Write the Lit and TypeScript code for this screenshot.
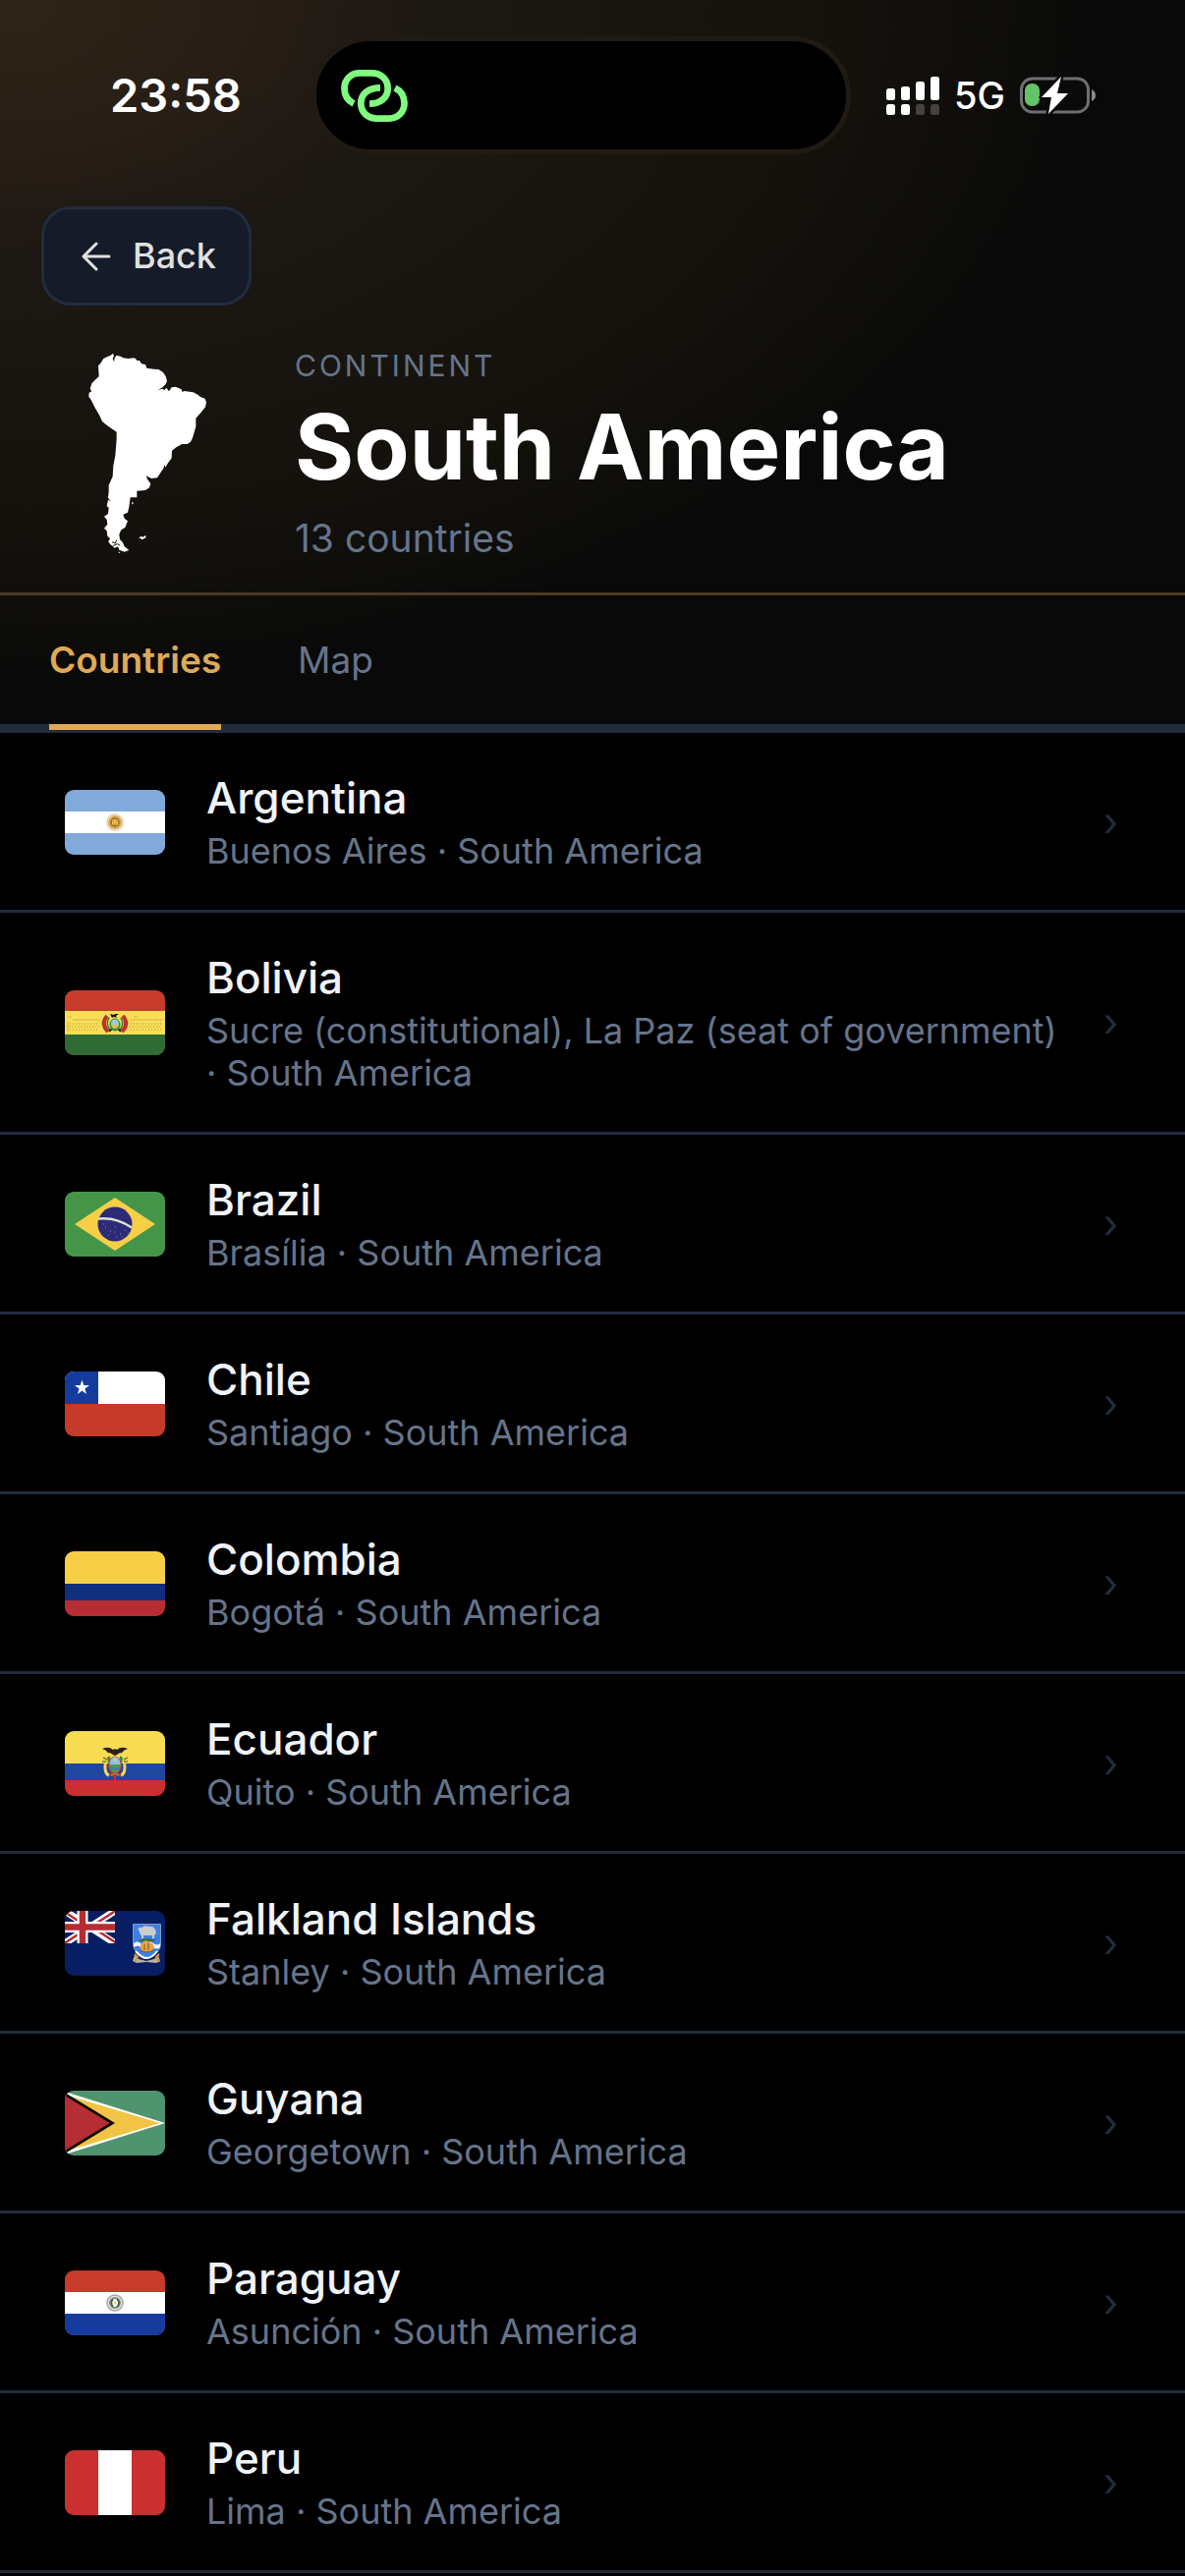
import { LitElement, html, svg, css, type TemplateResult } from "lit";
import { customElement, property, state } from "lit/decorators.js";
import { classMap } from "lit/directives/class-map.js";

interface Country {
  name: string;
  capital: string;
  flag: string;
}

const COUNTRIES: Country[] = [
  { name: "Argentina", capital: "Buenos Aires", flag: "ar" },
  { name: "Bolivia", capital: "Sucre (constitutional), La Paz (seat of government)", flag: "bo" },
  { name: "Brazil", capital: "Brasília", flag: "br" },
  { name: "Chile", capital: "Santiago", flag: "cl" },
  { name: "Colombia", capital: "Bogotá", flag: "co" },
  { name: "Ecuador", capital: "Quito", flag: "ec" },
  { name: "Falkland Islands", capital: "Stanley", flag: "fk" },
  { name: "Guyana", capital: "Georgetown", flag: "gy" },
  { name: "Paraguay", capital: "Asunción", flag: "py" },
  { name: "Peru", capital: "Lima", flag: "pe" },
];

// every flag is drawn on a 102x66 canvas
const FLAGS: Record<string, TemplateResult> = {
  ar: svg`
    <rect width="102" height="66" fill="#81a9da" />
    <rect y="22" width="102" height="22" fill="#fff" />
    <circle cx="51" cy="33" r="8" fill="none" stroke="#c9b48c" stroke-width="2" stroke-dasharray="1 1" />
    <circle cx="51" cy="33" r="7" fill="#e0a550" />
    <circle cx="51" cy="33" r="4" fill="#f2c14a" stroke="#8d6a2c" stroke-width="1.5" />
    <path d="M49 32h1M52 32h1M50 35h2" stroke="#8d6a2c" />
  `,
  bo: svg`
    <rect width="102" height="66" fill="#c63b2b" />
    <rect y="21" width="102" height="24" fill="#f6df56" />
    <rect y="45" width="102" height="21" fill="#306b33" />
    <path d="M3 27h4M8 30h28M3 32v10M66 30h34M70 27h4" stroke="#dfb04e" fill="none" />
    <path d="M5 34h30M4 37h31M5 40h30M67 34h31M66 37h32M67 40h31" stroke="#dfb04e" stroke-width="2" stroke-dasharray="1 2" />
    <path d="M43 26q-7 8 1 16M59 26q7 8-1 16" stroke="#bd322d" stroke-width="4" fill="none" />
    <path d="M45 28q-4 6 1 12M57 28q4 6-1 12" stroke="#3b7a3a" stroke-width="1.5" fill="none" />
    <path d="M45 42l4-4M57 42l-4-4" stroke="#26361f" stroke-width="2" />
    <ellipse cx="51" cy="35" rx="5.5" ry="6.5" fill="#3f8a45" />
    <ellipse cx="51" cy="34" rx="4" ry="4.5" fill="#9fcbe0" />
    <path d="M47 35h8q-1 4-4 4t-4-4z" fill="#d8c24d" />
    <path d="M46 24l4 1 1-1 4 0-3 2 1 2-3-1-2 1z" fill="#17170f" />
  `,
  br: svg`
    <rect width="102" height="66" fill="#459549" />
    <path d="M10 33L51 6l41 27-41 27z" fill="#f7cf46" />
    <circle cx="51" cy="33" r="17.5" fill="#2d2a78" />
    <path d="M34 27.5q18-2 34 9" stroke="#d9e2d6" stroke-width="2.5" fill="none" />
    <path d="M41 36h1M46 40h1M51 36h1M50 41h1M56 43h1M61 39h1M58 46h1M44 44h1M52 46h1M39 33h1M64 42h1" stroke="#6d8fae" />
  `,
  cl: svg`
    <rect width="102" height="33" fill="#fff" />
    <rect y="33" width="102" height="33" fill="#c63a2a" />
    <rect width="34" height="33" fill="#163b9e" />
    <path d="M17.500 8.500l1.800 5.500h5.700l-4.600 3.400 1.700 5.600-4.600-3.400-4.600 3.400 1.700-5.600-4.600-3.400h5.700z" fill="#fff" />
  `,
  co: svg`
    <rect width="102" height="33" fill="#f7cf46" />
    <rect y="33" width="102" height="17" fill="#112f7f" />
    <rect y="50" width="102" height="16" fill="#b62d33" />
  `,
  ec: svg`
    <rect width="102" height="33" fill="#f8dd52" />
    <rect y="33" width="102" height="17" fill="#1f479c" />
    <rect y="50" width="102" height="16" fill="#ca302f" />
    <path d="M42 29q-3 14 3 16M60 29q3 14-3 16" stroke="#efd65c" stroke-width="3" fill="none" />
    <path d="M39 27l4 2M38 31h4M64 27l-4 2M64 31h-4" stroke="#8a7a3a" stroke-width="1.5" />
    <path d="M45 45l4-2M57 45l-4-2M51 43v7" stroke="#c8302e" stroke-width="2" />
    <ellipse cx="51" cy="34.5" rx="7" ry="9" fill="#c5352f" />
    <ellipse cx="51" cy="34" rx="5.5" ry="8" fill="#8fc0e6" />
    <path d="M45.500 34h11q0 7-5.500 8-5.500-1-5.500-8z" fill="#4f9a4a" />
    <path d="M46 37h10v2H47z" fill="#3f7ec0" />
    <circle cx="51" cy="29" r="1.5" fill="#f5d34d" />
    <path d="M43 27l3-2v5l-2 3zM59 27l-3-2v5l2 3z" fill="#3f8a45" />
    <path d="M38 18q7-3 11 1l2-1 2 1q4-4 11-1-4 1-6 4-3 0-5 2l-2 1-2-1q-2-2-5-2-2-3-6-4z" fill="#2a211b" />
    <path d="M46 45q5-5 10 0l-2 1-3-2-3 2z" fill="#a87a3c" />
  `,
  fk: svg`
    <rect width="102" height="66" fill="#081e64" />
    <svg width="51" height="33" viewBox="0 0 51 33">
      <path d="M0 0l51 33M51 0L0 33" stroke="#fff" stroke-width="7" />
      <path d="M-2 0l20 13M53 33L33 20M53-1L33 12M-2 34l20-13" stroke="#b52d33" stroke-width="2.5" />
      <path d="M18 0v33M0 16.500h51" stroke="#fff" stroke-width="11" />
      <path d="M18 0v33M0 16.500h51" stroke="#b52d33" stroke-width="6.5" />
    </svg>
    <path d="M69.500 13.500h28v20q0 10-14 15-14-5-14-15z" fill="#3f7fe8" stroke="#8c9ab0" />
    <path d="M75 20q-1-4 3-3 4-3 7-1 5-1 7 3 2 4-1 6v3h-2v-3h-9v3h-2v-3q-2-1-2-4z" fill="#ccccc8" />
    <path d="M74 30q10-4 19 0l-3 1H77z" fill="#3f6e35" />
    <path d="M70 33q4-3 7 0t6 0 7 0 7 0v4q-4 3-7 0t-7 0-6 0-7 0z" fill="#fff" />
    <path d="M77 34l5-4 4 2 4 2 1 4-4 4h-6l-4-3z" fill="#e8a43e" />
    <path d="M81 34v6M85 33v7M76 40q7 4 14 0" stroke="#7a5426" fill="none" />
    <path d="M72 41q6 7 11 7 6 0 11-7" stroke="#fff" stroke-width="2" fill="none" />
    <path d="M71 45l4 4 8 2 8-2 4-4 2 6-4 2-10-1-10 1-4-2z" fill="#b9b3a4" />
    <path d="M71 44l3 3-3 5M96 44l-3 3 3 5" stroke="#d9913a" stroke-width="2" fill="none" />
  `,
  gy: svg`
    <rect width="102" height="66" fill="#4f936f" />
    <path d="M0 1l102 32L0 65z" fill="#fff" />
    <path d="M0 4l97 29L0 62z" fill="#f1c445" />
    <path d="M0 2l51 31L0 64z" fill="#000" />
    <path d="M0 5l46 28L0 61z" fill="#b42e33" />
  `,
  py: svg`
    <rect width="102" height="66" fill="#c63b2b" />
    <rect y="22" width="102" height="22" fill="#fff" />
    <rect y="44" width="102" height="22" fill="#163a9e" />
    <circle cx="51" cy="33" r="8" fill="#e9e9e6" stroke="#a2a6a4" stroke-width="1.5" />
    <circle cx="51" cy="33" r="5" fill="#fff" stroke="#7e8a80" stroke-width="2" />
    <path d="M49 29q-3 4 0 8M53 29q4 4 0 8" stroke="#35603b" fill="none" stroke-width="1.5" />
    <circle cx="51" cy="33" r="1.5" fill="#ead94c" />
  `,
  pe: svg`
    <rect width="102" height="66" fill="#c9302f" />
    <rect x="34" width="34" height="66" fill="#fff" />
  `,
};

@customElement("status-bar")
export class StatusBar extends LitElement {

  static styles = css`

    :host{
      display:flex;
      align-items:center;
      padding:37px 90px 0 112px;
      color:#fff;
    }

    .time{
      width:134px;
      font-size:47px;
      font-weight:600;
      line-height:58px;
    }

    .island{
      flex:1;
      display:flex;
      align-items:center;
      box-sizing:border-box;
      height:120px;
      margin:0 36px 0 71px;
      padding-left:25px;
      border:5px solid #201a14;
      border-radius:60px;
      background:#000;
    }

    .status{
      display:flex;
      align-items:center;
      gap:15px;
    }

    .network{
      font-size:38px;
      font-weight:500;
      line-height:46px;
    }

    svg{
      display:block;
      flex:none;
    }

  `;

  render(){
    return html`

      <span class="time">23:58</span>

      <div class="island">
        <svg width="68" height="53" viewBox="0 0 68 53" fill="none" stroke="#80fb80" stroke-width="6.8" aria-hidden="true">
          <path d="M13 34.500C7 31.500 3.500 26 3.500 19C3.500 10 10 3.400 19 3.400H31C41 3.400 47.700 10 47.700 19C47.700 28.500 40 34.700 29 34.700" />
          <path d="M55 18.500C61 21.500 64.500 27 64.500 34C64.500 43 58 49.600 49 49.600H37C27 49.600 20.300 43 20.300 34C20.300 24.500 28 18.300 40 18.300" />
        </svg>
      </div>

      <div class="status">
        <svg width="54" height="39" viewBox="0 0 54 39" fill="#fff" aria-label="Signal">
          <rect y="12" width="9" height="12" rx="2.5" />
          <rect x="15" y="10" width="9" height="14" rx="2.5" />
          <rect x="30" y="5" width="9" height="19" rx="2.5" />
          <rect x="45" width="9" height="24" rx="2.5" />
          <rect y="28" width="9" height="11" rx="2.5" />
          <rect x="15" y="28" width="9" height="11" rx="2.5" />
          <rect x="30" y="28" width="9" height="11" rx="2.5" fill="#45413e" />
          <rect x="45" y="28" width="9" height="11" rx="2.5" fill="#45413e" />
        </svg>
        <span class="network">5G</span>
        <svg width="78" height="38" viewBox="0 0 78 38" aria-label="Battery charging">
          <rect x="1.5" y="2" width="68" height="34" rx="11" fill="none" stroke="#6f6f73" stroke-width="3" />
          <path d="M73 13q4 2 4 6t-4 6z" fill="#8a8a8d" />
          <rect x="5" y="7" width="15" height="23" rx="7" fill="#62c466" />
          <path d="M42 0L22 21h10l-3 17 20-21H38z" fill="#fff" stroke="#0d0c0a" stroke-width="5" stroke-linejoin="round" paint-order="stroke" />
        </svg>
      </div>

    `;
  }

}

@customElement("country-row")
export class CountryRow extends LitElement {

  @property({ attribute: false }) country!: Country;

  static styles = css`

    :host{
      display:block;
    }

    .row{
      display:flex;
      align-items:center;
      padding:39px 68px 38px 66px;
      border-bottom:3px solid #222c3e;
      color:inherit;
      text-decoration:none;
    }

    .flag{
      display:block;
      flex:none;
      width:102px;
      height:66px;
      margin-right:42px;
      border-radius:9px;
    }

    .text{
      flex:1;
      min-width:0;
    }

    .name{
      display:block;
      margin-bottom:6px;
      color:#f0f3f8;
      font-size:44px;
      font-weight:500;
      line-height:54px;
    }

    .place{
      display:block;
      color:#66748b;
      font-size:36px;
      line-height:43px;
    }

    .chevron{
      margin-left:40px;
      color:#222c3e;
      font-size:40px;
      line-height:54px;
    }

  `;

  render(){
    const { name, capital, flag } = this.country;

    return html`

      <a class="row" href="#${flag}">
        <svg class="flag" viewBox="0 0 102 66" aria-hidden="true">${FLAGS[flag]}</svg>
        <span class="text">
          <span class="name">${name}</span>
          <span class="place">${capital} · South America</span>
        </span>
        <span class="chevron" aria-hidden="true">›</span>
      </a>

    `;
  }

}

@customElement("app-root")
export class AppRoot extends LitElement {

  @state() private tab = "Countries";

  static styles = css`

    :host{
      display:block;
      min-height:100vh;
      background:#000;
      color:#fff;
      font-family:Inter, "Liberation Sans", sans-serif;
    }

    .top{
      background:radial-gradient(
        ellipse farthest-corner at 0 0,
        #2f2619 0%,
        #261d15 16%,
        #1d1813 25%,
        #191611 36%,
        #15120d 50%,
        #0e0d0a 60%,
        #090909 66%
      );
    }

    .header{
      padding-bottom:27px;
      border-bottom:3px solid #4b3a23;
    }

    .back{
      display:flex;
      align-items:center;
      gap:20px;
      margin:53px 0 43px 42px;
      padding:24px 33px 24px 36px;
      border:3px solid #212c3f;
      border-radius:30px;
      background:#151b28;
      color:#e0e0e0;
      font:500 36px/47px Inter, "Liberation Sans", sans-serif;
    }

    .hero{
      display:flex;
      gap:48px;
      padding:0 48px;
    }

    .shape{
      flex:none;
      width:204px;
      height:214px;
    }

    .eyebrow{
      margin:0;
      color:#66748b;
      font-size:30px;
      line-height:36px;
      letter-spacing:3px;
      text-transform:uppercase;
    }

    .title{
      margin:0;
      font-size:92px;
      font-weight:700;
      line-height:130px;
    }

    .count{
      margin:0;
      color:#66748b;
      font-size:39px;
      line-height:56px;
    }

    .tabs{
      display:flex;
      gap:78px;
      padding:0 50px;
      border-bottom:9px solid #222c3e;
    }

    .tab{
      margin:0 0 -6px;
      padding:42px 0;
      border:0;
      border-bottom:6px solid transparent;
      background:none;
      color:#66748b;
      font:400 37px/47px Inter, "Liberation Sans", sans-serif;
    }

    .tab.active{
      border-color:#dfa957;
      color:#dfa957;
      font-weight:600;
    }

    .list{
      margin:0;
      padding:0;
      list-style:none;
    }

  `;

  render(){
    return html`

      <div class="top">
        <status-bar></status-bar>

        <header class="header">
          <button class="back" type="button">
            <svg width="34" height="34" viewBox="0 0 34 34" fill="none" stroke="currentColor" stroke-width="3" stroke-linecap="round" stroke-linejoin="round" aria-hidden="true">
              <path d="M30 17H4M17 4L4 17l13 13" />
            </svg>
            Back
          </button>

          <div class="hero">
            <svg class="shape" viewBox="-36 56 612 612" fill="#fff" aria-hidden="true">
              <path d="M165 58L168 66L164 74L168 84L170 72L176 64L188 67L196 72L212 74L228 72L234 74L238 80L246 80L252 90L264 92L268 103L290 106L304 107L318 116L326 128L330 142L326 152L316 162L302 170L316 166L322 171L328 163L336 174L344 162L356 160L374 168L377 176L382 173L410 177L424 184L432 191L446 196L450 208L447 222L434 238L418 256L418 282L412 302L408 316L402 328L392 335L376 335L358 345L345 355L344 378L332 394L325 406L322 398L320 408L312 420L300 438L282 440L266 432L270 442L280 456L276 468L264 476L238 478L238 498L218 498L216 512L214 528L210 544L196 550L200 562L210 570L202 590L190 597L184 610L186 626L195 636L200 648L214 659L200 664L184 658L180 648L170 652L156 640L152 630L156 624L148 616L146 600L138 592L148 580L146 566L138 556L150 548L152 530L146 524L150 506L158 508L150 500L152 480L152 460L164 434L166 400L172 370L176 320L176 298L150 280L132 266L124 248L110 224L98 200L91 190L92 178L100 174L95 166L100 150L112 138L122 128L120 96L126 90L136 74L148 68L158 64Z" />
              <path d="M243 624L250 616L256 619L264 614L266 620L254 627L248 622ZM222 512L228 514L224 520ZM150 632L160 628L166 638L158 642ZM180 664L188 665L184 668Z" />
              <path d="M162 634L172 638L176 628M164 646L178 640L186 644" fill="none" stroke="#191610" stroke-width="3" />
            </svg>
            <div>
              <p class="eyebrow">Continent</p>
              <h1 class="title">South America</h1>
              <p class="count">13 countries</p>
            </div>
          </div>
        </header>

        <nav class="tabs" role="tablist">
          ${["Countries", "Map"].map((name) => html`
            <button
              class=${classMap({ tab: true, active: this.tab === name })}
              type="button"
              role="tab"
              aria-selected=${this.tab === name}
              @click=${() => (this.tab = name)}
            >${name}</button>
          `)}
        </nav>
      </div>

      <ul class="list">
        ${COUNTRIES.map((country) => html`
          <li><country-row .country=${country}></country-row></li>
        `)}
      </ul>

    `;
  }

}
